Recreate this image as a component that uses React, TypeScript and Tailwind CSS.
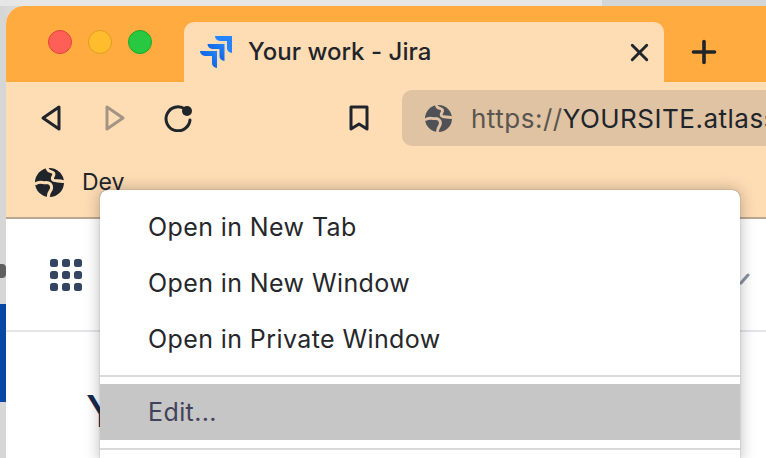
import { Plus, X } from "lucide-react";

const font = { fontFamily: "Inter, 'Liberation Sans', sans-serif" };

function Globe({ size, color, cut }: { size: number; color: string; cut: string }) {
  return (
    <svg width={size} height={size} viewBox="0 0 28 28" className="shrink-0">
      <circle cx="14" cy="14" r="14" fill={color} />
      <path
        d="M12 1c1 3 5 2 6 4 1 3-2 3-1 6 1 2 5 1 10 2M1 15c4-3 7 0 10-1 3 0 5 2 5 5 0 3-3 4-3 8"
        fill="none"
        stroke={cut}
        strokeWidth="3"
        strokeLinecap="round"
        strokeLinejoin="round"
      />
    </svg>
  );
}

function JiraLogo() {
  return (
    <svg width="32" height="32" viewBox="0 0 32 32" className="mr-4 shrink-0">
      <defs>
        <linearGradient id="jira-a" x1="1" y1="0" x2="0" y2="1">
          <stop offset="0" stopColor="#2684ff" />
          <stop offset="1" stopColor="#0052cc" />
        </linearGradient>
      </defs>
      <path d="M15 0h17v17a5 5 0 0 1-5-5V5h-7a5 5 0 0 1-5-5z" fill="#2684ff" />
      <path d="M7.500 8h17v17a5 5 0 0 1-5-5v-7h-7a5 5 0 0 1-5-5z" fill="url(#jira-a)" />
      <path d="M0 15h17v17a5 5 0 0 1-5-5v-7H5a5 5 0 0 1-5-5z" fill="url(#jira-a)" />
    </svg>
  );
}

function MenuRow({ label }: { label: string }) {
  return <div className="flex h-[56px] items-center pl-[48px]">{label}</div>;
}

export default function App() {
  return (
    <div className="relative flex h-[458px] w-[766px] flex-col overflow-hidden bg-[#d9d9d9]" style={font}>
      <div className="flex h-[6px] shrink-0">
        <div className="w-[602px] bg-[#e6e6e6]" />
        <div className="flex-1 bg-[#d3d6d8]" />
      </div>

      <div className="flex min-h-0 flex-1">
        <div className="flex w-[6px] shrink-0 flex-col">
          <div className="h-[258px] bg-[#d6d6d6]" />
          <div className="h-[14px] rounded-r-[4px] bg-[#5f5f5f]" />
          <div className="h-[26px] bg-[#d6d6d6]" />
          <div className="h-[98px] bg-[#0747a6]" />
          <div className="flex-1 bg-[#d6d6d6]" />
        </div>

        <div className="flex min-w-0 flex-1 flex-col overflow-hidden rounded-tl-[18px] bg-white">
          {/* tab strip */}
          <div className="flex h-[76px] shrink-0 items-end bg-[#ffab40]">
            <div className="flex h-[76px] w-[178px] items-center gap-[16px] pb-[4px] pl-[42px]">
              <div className="h-[24px] w-[24px] rounded-full border border-[#e2443d] bg-[#ff5f57]" />
              <div className="h-[24px] w-[24px] rounded-full border border-[#df9e1b] bg-[#ffbd2e]" />
              <div className="h-[24px] w-[24px] rounded-full border border-[#1aa82f] bg-[#28c840]" />
            </div>
            <div className="flex h-[60px] w-[480px] items-center rounded-t-[10px] bg-[#fedcb4] pl-[16px] pr-[10px] text-[24px] font-medium tracking-[0.03px] text-[#20242b]">
              <JiraLogo />
              <span className="flex-1 whitespace-nowrap">Your work - Jira</span>
              <X size={29} strokeWidth={2.4} />
            </div>
            <div className="flex h-[60px] w-[80px] items-center justify-center">
              <Plus size={36} strokeWidth={2.4} className="text-[#20242b]" />
            </div>
          </div>

          {/* toolbar */}
          <div className="flex h-[137px] shrink-0 flex-col border-b-2 border-[#b9a88f] bg-[#fedcb4] text-[#20242b]">
            <div className="flex h-[72px] items-center pl-[34px]">
              <svg width="22" height="28" viewBox="0 0 22 28" className="mr-[42px] shrink-0" fill="none" stroke="#20242b" strokeWidth="3" strokeLinejoin="round">
                <path d="M19 3v22L3 14z" />
              </svg>
              <svg width="22" height="28" viewBox="0 0 22 28" className="mr-[38px] shrink-0" fill="none" stroke="#a39484" strokeWidth="3" strokeLinejoin="round">
                <path d="M3 3v22l16-11z" />
              </svg>
              <svg width="30" height="28" viewBox="0 0 30 28" className="mr-[154px] shrink-0" fill="none">
                <path d="M21 5a12 12 0 1 0 5 11" stroke="#20242b" strokeWidth="3" strokeLinecap="round" />
                <circle cx="23" cy="7" r="5" fill="#20242b" />
              </svg>
              <svg width="22" height="28" viewBox="0 0 22 28" className="mr-[32px] shrink-0" fill="none" stroke="#20242b" strokeWidth="3" strokeLinejoin="round">
                <path d="M3 3h16v22l-8-5-8 5z" />
              </svg>
              <div className="flex h-[56px] flex-1 items-center overflow-hidden whitespace-nowrap rounded-l-[10px] bg-[#dfc3a3] pl-[23px] text-[26px] tracking-[0.5px]">
                <Globe size={27} color="#4f5157" cut="#dfc3a3" />
                <span className="ml-[19px] text-[#5a554f]">https://</span>
                <span>YOURSITE.atlassian.net</span>
              </div>
            </div>
            <div className="flex flex-1 items-start pl-[29px] pt-[14px] text-[23px]">
              <Globe size={29} color="#20242b" cut="#fedcb4" />
              <span className="ml-[18px] leading-[28px]">Dev</span>
            </div>
          </div>

          {/* jira page behind the menu */}
          <div className="flex h-[113px] shrink-0 items-center border-b-2 border-[#e4e5e9] pl-[44px]">
            <div className="grid grid-cols-3 gap-[4px]">
              {Array.from({ length: 9 }).map((_, i) => (
                <div key={i} className="h-[8px] w-[8px] rounded-[2.500px] bg-[#344563]" />
              ))}
            </div>
            <svg width="10" height="12" viewBox="0 0 10 12" className="ml-[658px] mt-[8px] shrink-0" fill="none" stroke="#8993a4" strokeWidth="3" strokeLinecap="round">
              <path d="M1 10l7-8" />
            </svg>
          </div>
          <div className="pl-[80px] pt-[54px] text-[44px] font-medium leading-[50px] text-[#172b4d]">Y</div>
        </div>
      </div>

      {/* context menu */}
      <div className="absolute left-[100px] top-[190px] w-[640px] rounded-t-[8px] bg-white pt-[10px] text-[25px] tracking-[0.4px] text-[#26272b] shadow-[0_0_16px_rgba(0,0,0,0.28),0_0_1px_rgba(0,0,0,0.6)]">
        <MenuRow label="Open in New Tab" />
        <MenuRow label="Open in New Window" />
        <MenuRow label="Open in Private Window" />
        <div className="mt-[7px] h-[2px] bg-[#dadada]" />
        <div className="mt-[7px] flex h-[56px] items-center bg-[#c6c6c6] pl-[48px] pt-[2px] text-[#42435a]">Edit...</div>
        <div className="mt-[8px] h-[2px] bg-[#dadada]" />
        <div className="h-[12px]" />
      </div>
    </div>
  );
}
